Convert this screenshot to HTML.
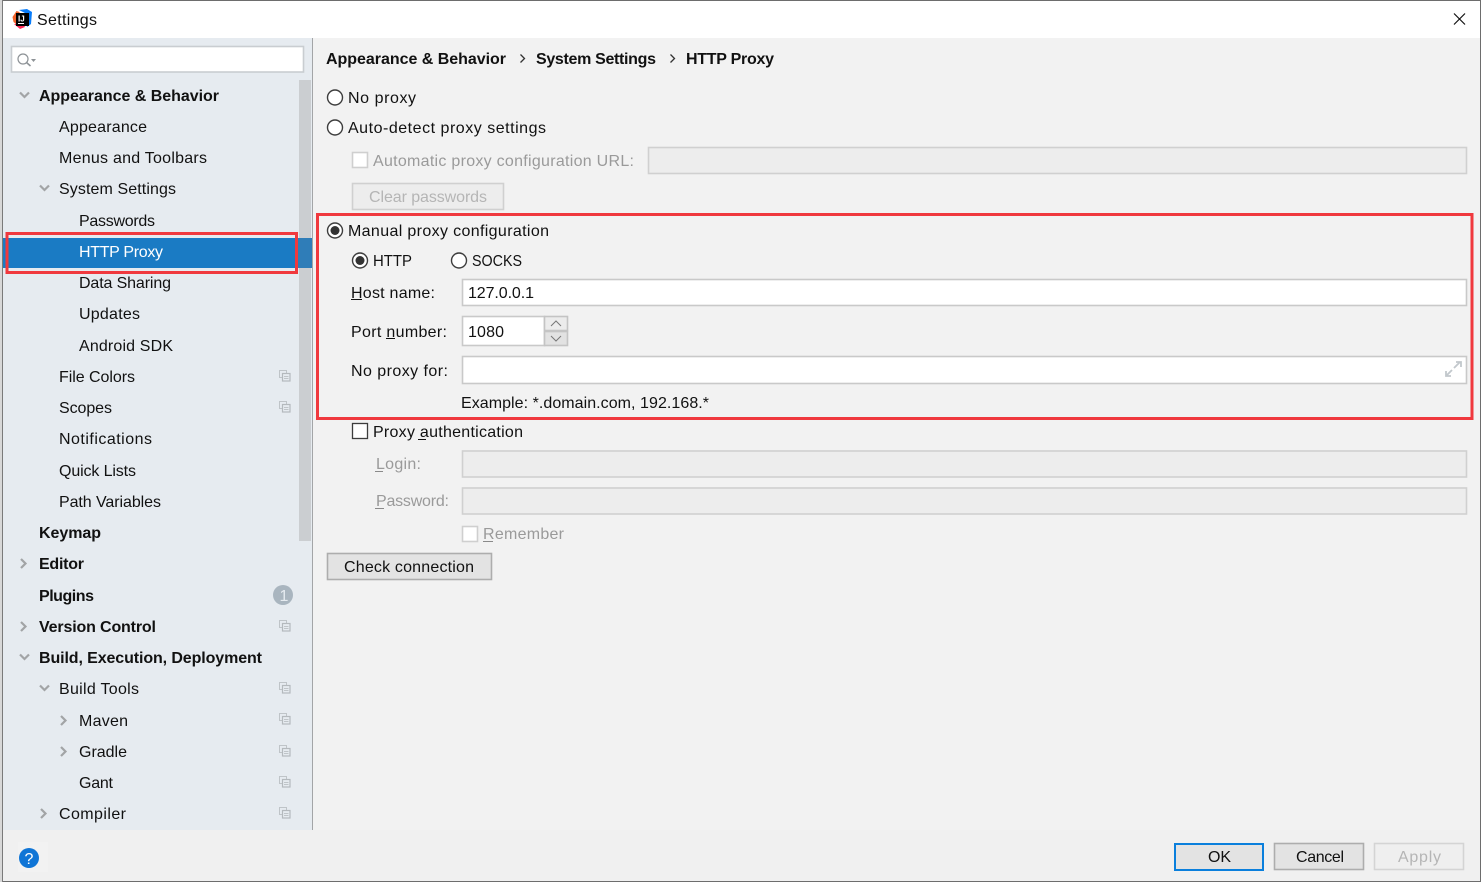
<!DOCTYPE html>
<html><head><meta charset="utf-8"><title>Settings</title>
<style>
html,body{margin:0;padding:0;background:#fff}
svg{display:block}
text{font-family:"Liberation Sans","Noto Sans CJK SC",sans-serif;font-size:16px;fill:#111}
.b{font-weight:bold}
.d{fill:#9a9a9a}
.c{fill:none;stroke:#a2a4a6;stroke-width:2.2}
.r{fill:#fff;stroke:#3d3d3d;stroke-width:1.4}
.f{stroke-width:1.6}
</style></head><body>
<svg width="1481" height="882" viewBox="0 0 1481 882" xmlns="http://www.w3.org/2000/svg">
<defs>
<g id="cp"><rect x="0.5" y="0.5" width="7" height="7" fill="none" stroke="#bfc4c8"/><rect x="3.500" y="3.500" width="7.500" height="7.500" fill="#e6ebf0" stroke="#b4b9bd" stroke-width="1.200"/><path d="M5 6.500h4.500M5 8.500h4.500" stroke="#bfc4c8"/></g>
</defs>
<rect width="1481" height="882" fill="#f0f0f0"/>
<rect x="0" y="0" width="1481" height="38" fill="#fff"/>
<rect x="313" y="38" width="1167" height="792" fill="#f2f2f2"/>
<rect x="3" y="38" width="309" height="792" fill="#e6ebf0"/>
<rect x="312" y="38" width="1" height="792" fill="#a3a5a7"/>
<!-- window border -->
<rect x="0" y="0" width="1481" height="1" fill="#6d6d6d"/>
<rect x="0" y="881" width="1481" height="1" fill="#6d6d6d"/>
<rect x="0" y="0" width="3" height="882" fill="#d8d8d8"/>
<rect x="2" y="0" width="1" height="882" fill="#7a7a7a"/>
<rect x="1480" y="0" width="1" height="882" fill="#6d6d6d"/>
<!-- title logo -->
<path d="M12.500 17l4-6 3 1v10l-2 3-4-3z" fill="#f2622a"/>
<path d="M19 10l8-1 5 3-1 12-4 3-2-14z" fill="#087cfa"/>
<path d="M14 24l6 5 5-2-2-4z" fill="#fe2857"/>
<rect x="16" y="13" width="13" height="13" fill="#000"/>
<text x="18" y="21.500" style="font-size:8px;font-weight:bold;fill:#fff">IJ</text>
<rect x="18" y="23" width="6" height="1" fill="#fff"/>
<text x="37" y="25" textLength="60">Settings</text>
<path d="M1454 13.500l11 11M1465 13.500l-11 11" stroke="#111" stroke-width="1.200" fill="none"/>
<!-- search -->
<rect x="11.500" y="46.500" width="292" height="25.500" fill="#fff" stroke="#c9cdd1" stroke-width="1.600"/>
<circle cx="23" cy="59" r="5" fill="none" stroke="#8d9296" stroke-width="1.200"/>
<path d="M26.500 62.500l4 3.500" stroke="#8d9296" stroke-width="1.500"/>
<path d="M31 59h5l-2.500 3z" fill="#8d9296"/>
<!-- sidebar scroll -->
<rect x="299" y="80" width="12" height="461" fill="#cbced1"/>
<!-- selection -->
<rect x="3" y="238" width="295" height="30" fill="#1a7bc4"/>
<rect x="298" y="238" width="14" height="30" fill="#2f7db8"/>
<!-- sidebar arrows -->
<path class="c" d="M20 92.500l4.500 4.500 4.500-4.500"/>
<path class="c" d="M40 185.500l4.500 4.500 4.500-4.500"/>
<path class="c" d="M21 559l4.500 4.500-4.500 4.500"/>
<path class="c" d="M21 622l4.500 4.500-4.500 4.500"/>
<path class="c" d="M20 654.500l4.500 4.500 4.500-4.500"/>
<path class="c" d="M40 685.500l4.500 4.500 4.500-4.500"/>
<path class="c" d="M61 716l4.500 4.500-4.500 4.500"/>
<path class="c" d="M61 747l4.500 4.500-4.500 4.500"/>
<path class="c" d="M41 809l4.500 4.500-4.500 4.500"/>
<!-- sidebar text -->
<text class="b" x="39" y="101" textLength="180">Appearance &amp; Behavior</text>
<text x="59" y="132" textLength="88">Appearance</text>
<text x="59" y="163" textLength="148">Menus and Toolbars</text>
<text x="59" y="194" textLength="117">System Settings</text>
<text x="79" y="226" textLength="76">Passwords</text>
<text x="79" y="257" textLength="84" style="fill:#fff">HTTP Proxy</text>
<text x="79" y="288" textLength="92">Data Sharing</text>
<text x="79" y="319" textLength="61">Updates</text>
<text x="79" y="351" textLength="94">Android SDK</text>
<text x="59" y="382" textLength="76">File Colors</text>
<text x="59" y="413" textLength="53">Scopes</text>
<text x="59" y="444" textLength="93">Notifications</text>
<text x="59" y="476" textLength="77">Quick Lists</text>
<text x="59" y="507" textLength="102">Path Variables</text>
<text class="b" x="39" y="538" textLength="62">Keymap</text>
<text class="b" x="39" y="569" textLength="45">Editor</text>
<text class="b" x="39" y="601" textLength="55">Plugins</text>
<text class="b" x="39" y="632" textLength="117">Version Control</text>
<text class="b" x="39" y="663" textLength="223">Build, Execution, Deployment</text>
<text x="59" y="694" textLength="80">Build Tools</text>
<text x="79" y="726" textLength="49">Maven</text>
<text x="79" y="757" textLength="48">Gradle</text>
<text x="79" y="788" textLength="34">Gant</text>
<text x="59" y="819" textLength="67">Compiler</text>
<!-- copy icons -->
<use href="#cp" x="279" y="370"/><use href="#cp" x="279" y="401"/>
<use href="#cp" x="279" y="620"/><use href="#cp" x="279" y="682"/>
<use href="#cp" x="279" y="713"/><use href="#cp" x="279" y="745"/>
<use href="#cp" x="279" y="776"/><use href="#cp" x="279" y="807"/>
<circle cx="283" cy="595" r="10" fill="#a9b5bf"/>
<text x="279.500" y="601" textLength="7" style="fill:#e6ebf0">1</text>
<!-- help -->
<rect x="18" y="842" width="30" height="30" fill="#f2f2f2"/>
<circle cx="29" cy="858" r="10" fill="#0f75d6"/>
<text x="24.500" y="864" textLength="9" style="fill:#fff">?</text>
<!-- breadcrumb -->
<text class="b" x="326" y="64" textLength="180">Appearance &amp; Behavior</text>
<path d="M520.500 54.500l4 4-4 4" fill="none" stroke="#333" stroke-width="1.300"/>
<text class="b" x="536" y="64" textLength="120">System Settings</text>
<path d="M670.500 54.500l4 4-4 4" fill="none" stroke="#333" stroke-width="1.300"/>
<text class="b" x="686" y="64" textLength="88">HTTP Proxy</text>
<!-- top radios -->
<circle class="r" cx="335" cy="97.500" r="7.500"/>
<text x="348" y="103" textLength="68">No proxy</text>
<circle class="r" cx="335" cy="127.500" r="7.500"/>
<text x="348" y="133" textLength="198">Auto-detect proxy settings</text>
<rect x="352.500" y="152.500" width="15" height="15" fill="#fff" stroke="#cfcfcf" class="f"/>
<text class="d" x="373" y="166" textLength="261">Automatic proxy configuration URL:</text>
<rect x="648.500" y="147.500" width="818" height="26" fill="#ededed" stroke="#d0d0d0" class="f"/>
<rect x="352.500" y="183.500" width="151" height="26" fill="#ededed" stroke="#d0d0d0" class="f"/>
<text x="369" y="202" textLength="118" style="fill:#b5b5b5">Clear passwords</text>
<!-- manual -->
<circle class="r" cx="335" cy="230.500" r="7.500"/>
<circle cx="335" cy="230.500" r="4.500" fill="#333"/>
<text x="348" y="236" textLength="201">Manual proxy configuration</text>
<circle class="r" cx="360" cy="260.500" r="7.500"/>
<circle cx="360" cy="260.500" r="4.500" fill="#333"/>
<text x="373" y="266" textLength="39" lengthAdjust="spacingAndGlyphs">HTTP</text>
<circle class="r" cx="459" cy="260.500" r="7.500"/>
<text x="472" y="266" textLength="50" lengthAdjust="spacingAndGlyphs">SOCKS</text>
<text x="351" y="298" textLength="84">Host name:</text>
<rect x="351" y="299" width="11" height="1" fill="#111"/>
<rect x="462.500" y="279.500" width="1004" height="26" fill="#fff" stroke="#c9c9c9" class="f"/>
<text x="468" y="298" textLength="66">127.0.0.1</text>
<text x="351" y="337" textLength="96">Port number:</text>
<rect x="386" y="338" width="9" height="1" fill="#111"/>
<rect x="462.500" y="316.500" width="82" height="29" fill="#fff" stroke="#c9c9c9" class="f"/>
<text x="468" y="337" textLength="36">1080</text>
<rect x="544.500" y="316.500" width="23" height="14" fill="#ececec" stroke="#c4c4c4" class="f"/>
<rect x="544.500" y="331.500" width="23" height="14" fill="#e2e2e2" stroke="#c4c4c4" class="f"/>
<path d="M551 326l5-5 5 5" fill="none" stroke="#777" stroke-width="1"/>
<path d="M551 336l5 5 5-5" fill="none" stroke="#777" stroke-width="1"/>
<text x="351" y="376" textLength="97">No proxy for:</text>
<rect x="462.500" y="356.500" width="1004" height="27" fill="#fff" stroke="#c9c9c9" class="f"/>
<path d="M1454 368l6-6M1456 362h5v5M1452 370l-6 6M1446 371v5h5" fill="none" stroke="#c2c8cc" stroke-width="1.800"/>
<text x="461" y="408" textLength="248">Example: *.domain.com, 192.168.*</text>
<!-- auth -->
<rect x="352.500" y="423.500" width="15" height="15" fill="#fff" stroke="#3d3d3d" stroke-width="1.300"/>
<text x="373" y="437" textLength="150">Proxy authentication</text>
<rect x="418" y="439" width="8" height="1" fill="#111"/>
<text class="d" x="376" y="469" textLength="45">Login:</text>
<rect x="375" y="471" width="8" height="1" fill="#8a8a8a"/>
<rect x="462.500" y="451" width="1004" height="26" fill="#ededed" stroke="#d0d0d0" class="f"/>
<text class="d" x="376" y="506" textLength="73">Password:</text>
<rect x="375" y="508" width="9" height="1" fill="#8a8a8a"/>
<rect x="462.500" y="488" width="1004" height="26" fill="#ededed" stroke="#d0d0d0" class="f"/>
<rect x="462.500" y="526.500" width="15" height="15" fill="#fff" stroke="#cfcfcf" class="f"/>
<text class="d" x="483" y="539" textLength="81">Remember</text>
<rect x="483" y="541" width="10" height="1" fill="#8a8a8a"/>
<rect x="327.500" y="553.500" width="164" height="26" fill="#e3e3e3" stroke="#adadad" class="f"/>
<text x="344" y="572" textLength="130">Check connection</text>
<!-- footer -->
<rect x="1175" y="844" width="88" height="26" fill="#e3e3e3" stroke="#0a7fdc" stroke-width="2"/>
<text x="1208" y="862" textLength="23">OK</text>
<rect x="1274.500" y="843.500" width="89" height="26" fill="#e3e3e3" stroke="#adadad" class="f"/>
<text x="1296" y="862" textLength="48">Cancel</text>
<rect x="1374.500" y="843.500" width="89" height="26" fill="#efefef" stroke="#d4d4d4" class="f"/>
<text x="1398" y="862" textLength="43" style="fill:#b5b5b5">Apply</text>
<!-- red annotations -->
<rect x="7" y="233.500" width="289.500" height="39" fill="none" stroke="#f0393e" stroke-width="3"/>
<rect x="317.500" y="214.500" width="1154.500" height="204" fill="none" stroke="#f0393e" stroke-width="3"/>
</svg>
</body></html>
